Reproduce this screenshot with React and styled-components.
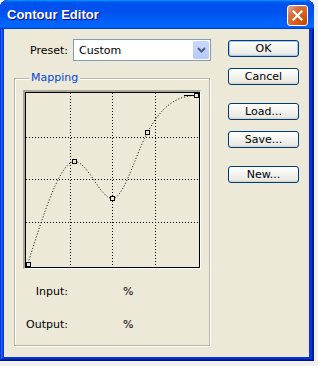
import React from 'react';
import styled, { createGlobalStyle } from 'styled-components';

const GlobalStyle = createGlobalStyle`
  html, body { margin: 0; padding: 0; background: #eef0f2; }
  body { font-family: "DejaVu Sans", Verdana, sans-serif; font-size: 11px; color: #000; }
`;

const Window = styled.div`
  width: 314px;
  height: 361px;
  display: flex;
  flex-direction: column;
  border-radius: 8px 8px 0 0;
  overflow: hidden;
  background: #0831d9;
  box-shadow: inset -1px -1px #00138c, inset 1px 1px #0831d9, inset -2px -2px #001ea0,
    inset 2px 2px #166aee, inset -3px -3px #003bda, inset 3px 3px #0855dd;
`;

const TitleBar = styled.div`
  height: 29px;
  flex: none;
  display: flex;
  align-items: flex-start;
  padding: 0 6px 0 7px;
  background: linear-gradient(180deg, #0997ff, #0053ee 8%, #0050ee 40%, #06f 88%, #06f 93%, #005bff 95%, #003dd7 96%, #003dd7);
  border-radius: 8px 8px 0 0;
`;

const Title = styled.span`
  margin-top: 7px;
  font-family: "Liberation Sans", Arial, sans-serif;
  font-weight: bold;
  font-size: 13px;
  line-height: 16px;
  color: #fff;
  text-shadow: 1px 1px #0f1089;
`;

const CloseButton = styled.div`
  margin-left: auto;
  margin-top: 5px;
  width: 21px;
  height: 21px;
  box-sizing: border-box;
  border: 1px solid #fff;
  border-radius: 3px;
  background: radial-gradient(circle at 90% 90%, #cc4600 0%, #dc6527 55%, #cd7546 70%, #e5a288 90%);
  display: flex;
  align-items: center;
  justify-content: center;
`;

const Client = styled.div`
  flex: 1;
  margin: 0 5px 4px 4px;
  background: #ece9d8;
  display: flex;
`;

const LeftCol = styled.div`
  width: 197px;
  margin-left: 10px;
  display: flex;
  flex-direction: column;
`;

const PresetRow = styled.div`
  margin-top: 10px;
  height: 22px;
  display: flex;
  align-items: center;
`;

const FieldLabel = styled.span`
  width: ${p => p.$w}px;
  text-align: right;
  flex: none;
`;

const Select = styled.div`
  margin-left: 5px;
  width: 138px;
  height: 22px;
  flex: none;
  box-sizing: border-box;
  border: 1px solid #7f9db9;
  background: #fff;
  display: flex;
  align-items: center;
  padding: 1px 1px 1px 5px;
`;

const SelectText = styled.span`
  flex: 1;
`;

const SelectArrow = styled.div`
  width: 16px;
  height: 18px;
  border-radius: 2px;
  background: linear-gradient(180deg, #c9d8fc, #b6cafa);
  display: flex;
  align-items: center;
  justify-content: center;
`;

const GroupBox = styled.div`
  position: relative;
  margin-top: 17px;
  width: 196px;
  height: 268px;
  box-sizing: border-box;
  border: 1px solid #bcb9a9;
  box-shadow: inset 1px 1px #fff, 1px 1px #fff;
  padding: 11px 0 0 8px;
`;

const GroupLegend = styled.span`
  position: absolute;
  top: -8px;
  left: 14px;
  padding: 0 2px;
  background: #ece9d8;
  color: #0046d5;
  line-height: 14px;
`;

const Frame = styled.div`
  width: 175px;
  height: 176px;
  border-top: 2px solid #a9a797;
  border-left: 2px solid #a9a797;
  border-right: 1px solid #fff;
  border-bottom: 1px solid #fff;
`;

const Canvas = styled.svg`
  display: block;
  border: 1px solid #000;
  background: #ece9d8;
`;

const ValueRow = styled.div`
  display: flex;
  align-items: center;
  height: 14px;
  margin-top: ${p => p.$top}px;
`;

const Unit = styled.span`
  margin-left: 55px;
`;

const RightCol = styled.div`
  margin-left: 17px;
  padding-top: 11px;
  display: flex;
  flex-direction: column;
`;

const Button = styled.button`
  width: 71px;
  height: 17px;
  margin-top: ${p => p.$gap || 0}px;
  padding: 0;
  box-sizing: border-box;
  border: 1px solid #003c74;
  border-radius: 3px;
  background: linear-gradient(180deg, #fff 0%, #f3f3ef 45%, #ecebe6 85%, #d6d0c5 100%);
  box-shadow: ${p => (p.$default ? 'inset 0 0 0 1px #a8c4f3' : 'none')};
  font-family: "DejaVu Sans", Verdana, sans-serif;
  font-size: 11px;
  line-height: 15px;
  color: #000;
`;

const grid = [44.5, 86.5, 129.5];
const points = [
  [2.5, 171.5],
  [48.5, 68.5],
  [86.5, 105.5],
  [121.5, 39.5],
  [170.5, 2.5],
];

function Graph() {
  return (
    <Canvas width="173" height="174" viewBox="0 0 173 174">
      {grid.map(v => (
        <line key={'v' + v} x1={v} y1="0" x2={v} y2="174" stroke="#000" strokeDasharray="1 2" />
      ))}
      {grid.map(v => (
        <line key={'h' + v} x1="0" y1={v} x2="173" y2={v} stroke="#000" strokeDasharray="1 2" />
      ))}
      <path
        d="M2,170 C12,140 32,68.5 48.5,68.5 C62,68.5 74,105.5 86.5,105.5 C98,105.5 110,60 121.5,39.5 C135,14 150,2.5 170.5,2.5"
        fill="none"
        stroke="#000"
        strokeDasharray="1 2"
      />
      <line x1="158" y1="2.5" x2="170" y2="2.5" stroke="#000" />
      {points.map(([x, y]) => (
        <rect key={x} x={x - 2} y={y - 2} width="4" height="4" fill="#ece9d8" stroke="#000" />
      ))}
    </Canvas>
  );
}

export default function App() {
  return (
    <>
      <GlobalStyle />
      <Window>
        <TitleBar>
          <Title>Contour Editor</Title>
          <CloseButton>
            <svg width="11" height="11" viewBox="0 0 11 11">
              <path d="M1.5 1.5 L9.5 9.5 M9.5 1.5 L1.5 9.5" stroke="#fff" strokeWidth="2.2" strokeLinecap="square" />
            </svg>
          </CloseButton>
        </TitleBar>
        <Client>
          <LeftCol>
            <PresetRow>
              <FieldLabel $w={54}>Preset:</FieldLabel>
              <Select>
                <SelectText>Custom</SelectText>
                <SelectArrow>
                  <svg width="9" height="6" viewBox="0 0 9 6">
                    <path d="M1 1 L4.5 4.5 L8 1" fill="none" stroke="#4d6185" strokeWidth="2" />
                  </svg>
                </SelectArrow>
              </Select>
            </PresetRow>
            <GroupBox>
              <GroupLegend>Mapping</GroupLegend>
              <Frame>
                <Graph />
              </Frame>
              <ValueRow $top={15}>
                <FieldLabel $w={45}>Input:</FieldLabel>
                <Unit>%</Unit>
              </ValueRow>
              <ValueRow $top={19}>
                <FieldLabel $w={45}>Output:</FieldLabel>
                <Unit>%</Unit>
              </ValueRow>
            </GroupBox>
          </LeftCol>
          <RightCol>
            <Button $default>OK</Button>
            <Button $gap={11}>Cancel</Button>
            <Button $gap={18}>Load...</Button>
            <Button $gap={11}>Save...</Button>
            <Button $gap={18}>New...</Button>
          </RightCol>
        </Client>
      </Window>
    </>
  );
}
